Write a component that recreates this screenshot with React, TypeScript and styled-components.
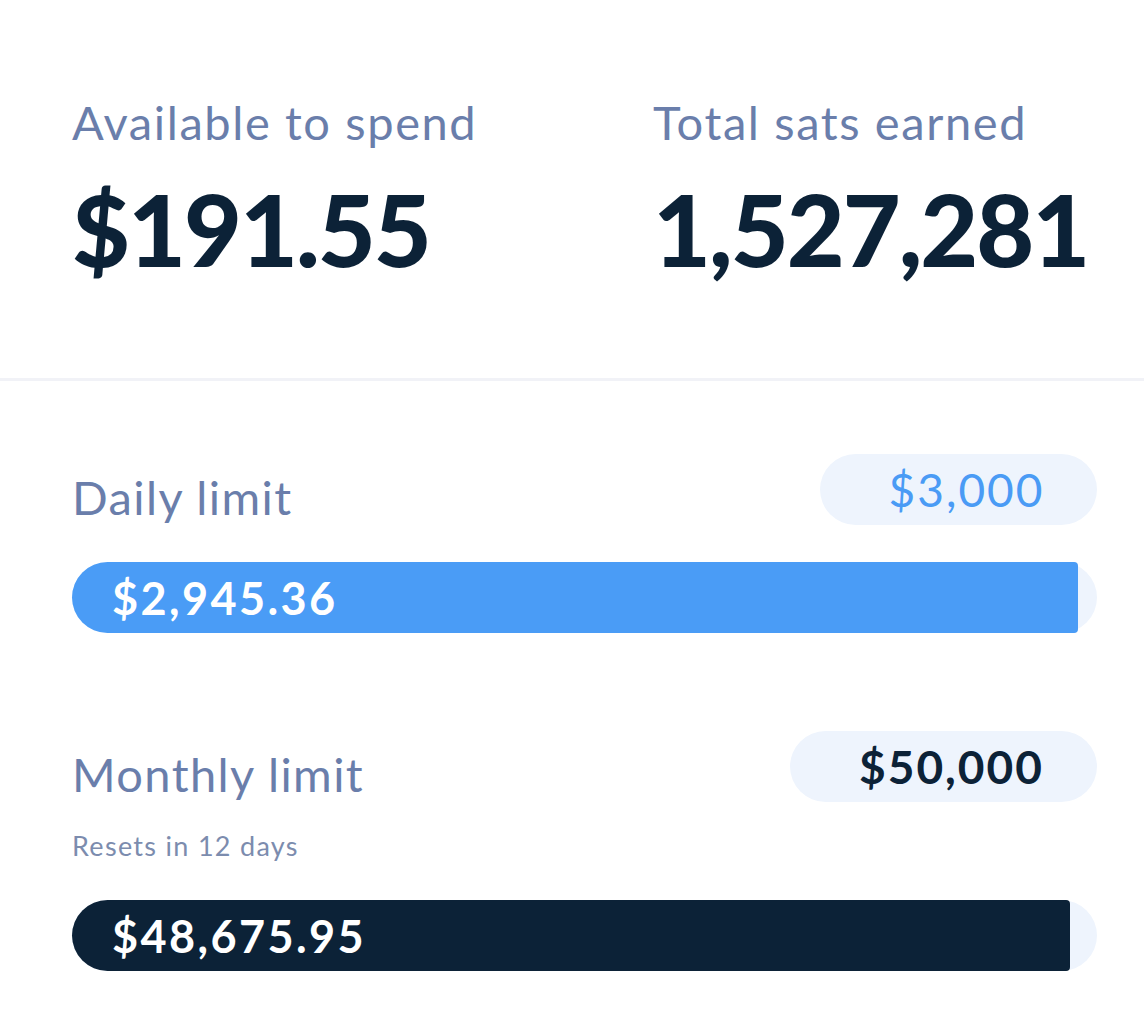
import React from 'react'
import styled, { createGlobalStyle } from 'styled-components'

const GlobalStyle = createGlobalStyle`
  html, body {
    margin: 0;
    padding: 0;
    background: #fff;
  }
  body {
    font-family: Lato, 'Noto Sans', 'Liberation Sans', sans-serif;
    -webkit-font-smoothing: antialiased;
  }
`

const Page = styled.div`
  width: 1144px;
  min-height: 1013px;
  background: #fff;
`

const Balances = styled.section`
  display: grid;
  grid-template-columns: 581px 1fr;
  padding: 92px 0 0 72px;
  height: 286px;
  border-bottom: 3px solid #f1f2f7;
`

const Stat = styled.div`
  display: flex;
  flex-direction: column;
`

const StatLabel = styled.div`
  font-size: 47px;
  line-height: 60px;
  color: #6a7eab;
  letter-spacing: 1.6px;
`

const StatValue = styled.div`
  margin-top: 26px;
  font-size: 100px;
  line-height: 100px;
  font-weight: 900;
  color: #0c2237;
  letter-spacing: -2px;
`

const Limits = styled.section`
  display: flex;
  flex-direction: column;
  gap: 98px;
  padding: 73px 47px 0 72px;
`

const Limit = styled.div`
  display: flex;
  flex-direction: column;
`

const LimitHead = styled.div`
  display: flex;
  align-items: center;
  justify-content: space-between;
  height: 71px;
`

const LimitTitle = styled.div`
  font-size: 47px;
  color: #6a7eab;
  padding-top: 14px;
  letter-spacing: 1.4px;
`

const Pill = styled.div<{ $width: number; $color: string; $weight: number }>`
  width: ${p => p.$width}px;
  height: 71px;
  border-radius: 36px;
  background: #eef4fd;
  color: ${p => p.$color};
  font-size: 46px;
  font-weight: ${p => p.$weight};
  letter-spacing: 2px;
  display: flex;
  align-items: center;
  justify-content: center;
  box-sizing: border-box;
  padding-left: 16px;
`

const Note = styled.div`
  margin-top: 27px;
  font-size: 27px;
  color: #7c8cae;
  letter-spacing: 1.3px;
`

const Track = styled.div<{ $top: number }>`
  margin-top: ${p => p.$top}px;
  height: 71px;
  border-radius: 36px;
  background: #eef4fd;
  display: flex;
`

const Fill = styled.div<{ $color: string }>`
  height: 100%;
  background: ${p => p.$color};
  border-radius: 36px 4px 4px 36px;
  display: flex;
  align-items: center;
  padding-left: 40px;
  box-sizing: border-box;
  color: #fff;
  font-size: 45px;
  font-weight: 700;
  letter-spacing: 2.4px;
`

type LimitRow = {
  title: string
  cap: string
  capWidth: number
  capColor: string
  capWeight: number
  used: string
  ratio: number
  color: string
  note?: string
}

const limits: LimitRow[] = [
  {
    title: 'Daily limit',
    cap: '$3,000',
    capWidth: 277,
    capColor: '#4a9bf5',
    capWeight: 400,
    used: '$2,945.36',
    ratio: 2945.36 / 3000,
    color: '#4a9cf6',
  },
  {
    title: 'Monthly limit',
    cap: '$50,000',
    capWidth: 307,
    capColor: '#0c2237',
    capWeight: 700,
    used: '$48,675.95',
    ratio: 48675.95 / 50000,
    color: '#0c2237',
    note: 'Resets in 12 days',
  },
]

export default function App() {
  return (
    <Page>
      <GlobalStyle />
      <Balances>
        <Stat>
          <StatLabel>Available to spend</StatLabel>
          <StatValue>$191.55</StatValue>
        </Stat>
        <Stat>
          <StatLabel>Total sats earned</StatLabel>
          <StatValue>1,527,281</StatValue>
        </Stat>
      </Balances>

      <Limits>
        {limits.map(l => (
          <Limit key={l.title}>
            <LimitHead>
              <LimitTitle>{l.title}</LimitTitle>
              <Pill $width={l.capWidth} $color={l.capColor} $weight={l.capWeight}>
                {l.cap}
              </Pill>
            </LimitHead>
            {l.note && <Note>{l.note}</Note>}
            <Track $top={l.note ? 38 : 37}>
              <Fill $color={l.color} style={{ width: `${l.ratio * 100}%` }}>
                {l.used}
              </Fill>
            </Track>
          </Limit>
        ))}
      </Limits>
    </Page>
  )
}
